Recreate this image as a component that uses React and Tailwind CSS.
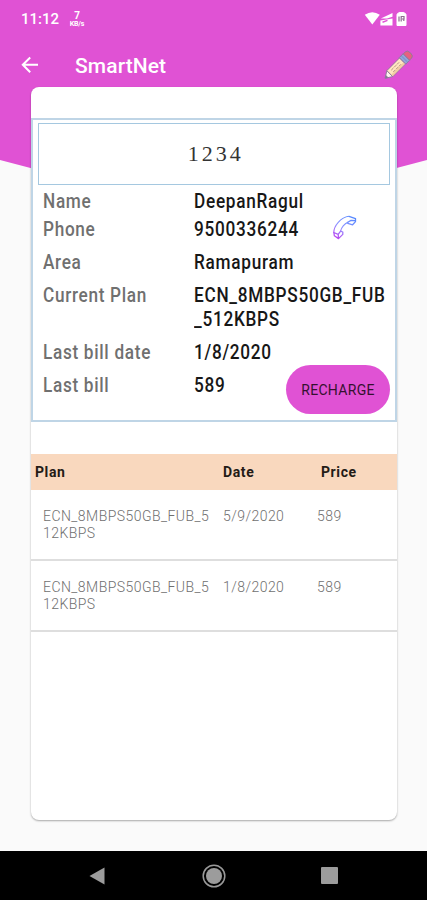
import React from "react";

const details = [
  { label: "Name", value: ["DeepanRagul"], gap: "mb-1" },
  { label: "Phone", value: ["9500336244"], gap: "mb-[9px]", phone: true },
  { label: "Area", value: ["Ramapuram"], gap: "mb-[9px]" },
  { label: "Current Plan", value: ["ECN_8MBPS50GB_FUB", "_512KBPS"], gap: "mb-[9px]" },
  { label: "Last bill date", value: ["1/8/2020"], gap: "mb-[9px]" },
  { label: "Last bill", value: ["589"], gap: "" },
];

const bills = [
  { date: "5/9/2020", price: "589" },
  { date: "1/8/2020", price: "589" },
];

function StatusBar() {
  return (
    <div className="flex h-[37px] items-center pl-[21px] pr-[19px] text-white">
      <span className="w-[38px] whitespace-nowrap pt-px text-[15px] font-medium leading-none">11:12</span>
      <span className="ml-[10px] flex w-4 flex-col items-center pt-px font-bold">
        <span className="text-[10px] leading-[10px]">7</span>
        <span className="text-[7px] leading-[7px] tracking-[-0.2px]">KB/s</span>
      </span>
      <svg className="ml-auto" width="44" height="16" viewBox="0 0 44 16">
        <path d="M.8 3.8Q8.3-1.3 15.8 3.8L8.3 13.4Z" fill="#fff" />
        <path d="M16.4 14.5V9.5L28.5 7.5V14.5Z" fill="#fff" />
        <path d="M16.8 7.6L28.5 2V5.8L23 7.4Z" fill="#fff" />
        <path d="M18.5 11.2L23.5 9.4" stroke="#e052d4" strokeWidth="1.5" />
        <path d="M33 3.2L35.2 1.5H39.8L42 3.2V14.5H33Z" fill="#fff" stroke="#fff" strokeLinejoin="round" />
        <path d="M35 10.5V5.5M37.2 10.5V5.5H40V8H38M39.8 8V10" stroke="#8d6b8e" strokeWidth="1.2" fill="none" />
      </svg>
    </div>
  );
}

function Pencil() {
  return (
    <svg width="30" height="30" viewBox="0 0 30 30">
      <g transform="translate(2.2 28.2) rotate(-45)" stroke="#8f7a9c" strokeWidth=".9" strokeLinejoin="round">
        <path d="M0 0L6.5-4.2V4.2Z" fill="#fff4f0" />
        <path d="M0 0L2.4-1.5V1.5Z" fill="#746984" />
        <path d="M6.5-4.2H24.5V4.2H6.5Z" fill="#ffe6c0" />
        <path d="M7 1.8H24.3V3.8H7Z" fill="#f2cda2" stroke="none" />
        <path d="M10-1.4H22M10 1.3H22" stroke="#a58476" strokeWidth=".8" strokeDasharray="3 1" />
        <path d="M24.5-4.6H30V4.6H24.5Z" fill="#92a4dc" />
        <path d="M27.2-4V4" stroke="#728cc2" />
        <path d="M30-4.4H33Q35.8-4.4 35.8 0T33 4.4H30Z" fill="#e8607f" />
      </g>
    </svg>
  );
}

function PhoneIcon() {
  return (
    <svg className="ml-auto mr-[38px]" width="25" height="25" viewBox="0 0 25 25" fill="none">
      <defs>
        <linearGradient id="call" x1="20" y1="0" x2="5" y2="25" gradientUnits="userSpaceOnUse">
          <stop stopColor="#5087ff" />
          <stop offset=".55" stopColor="#9093ff" />
          <stop offset="1" stopColor="#c03df0" />
        </linearGradient>
      </defs>
      <path d="M1.8 17.5C1.8 11 8.6 2.2 17 1.3M15.8 7.2C12.6 8.6 9.2 12.6 8.6 16.2" stroke="url(#call)" strokeWidth="1.1" strokeLinecap="round" />
      <path d="M17 1.3L23.5 3.6V6.6L20.6 9.8L15.8 8.4V7.2L19 5.4L23.5 5.6M8.6 16.2L10.8 17V19.4L6.5 23.6L2.4 20.8L1.8 17.5L6.2 19.4L8.6 16.2ZM6.2 19.4L6.5 23.6" stroke="url(#call)" strokeWidth="1.3" strokeLinejoin="round" />
    </svg>
  );
}

function AccountDetails() {
  return (
    <section className="h-[304px] border-2 border-[#bfd5e6] px-[5px] pt-[3px]">
      <div className="flex h-[62px] items-center justify-center border-[1.5px] border-[#a5c8e0] pl-[3px] pt-[2px] font-['Liberation_Serif',serif] text-[#333]">
        <span className="scale-x-[1.05] text-[21px] tracking-[2.9px]">1234</span>
      </div>
      <dl className="mt-1 pl-[5px] text-[20px] font-medium leading-6">
        {details.map((row) => (
          <div key={row.label} className={"flex " + row.gap}>
            <dt className="w-[151px] shrink-0 whitespace-nowrap text-[#707070]">
              <span className="inline-block origin-left scale-x-[0.86] tracking-[0.8px]">{row.label}</span>
            </dt>
            <dd className="w-[160px] shrink-0 whitespace-nowrap text-[#171717]">
              {row.value.map((line) => (
                <span key={line} className="block origin-left scale-x-[0.86] tracking-[0.84px]">{line}</span>
              ))}
            </dd>
            {row.phone && <div className="-ml-[22px] -mt-[2px] h-[24px]"><PhoneIcon /></div>}
          </div>
        ))}
      </dl>
      <div className="-mt-[32px] flex justify-end">
        <button className="h-[49px] w-[104px] rounded-full bg-[#e052d4] pt-[2px] text-[14px] tracking-[0.3px] text-[#35112f]">RECHARGE</button>
      </div>
    </section>
  );
}

function BillHistory() {
  return (
    <section className="mt-[32px]">
      <div className="grid h-9 grid-cols-[188px_98px_1fr] items-center bg-[#f9d8be] pl-1 pt-px text-[14px] font-bold tracking-[0.6px] text-[#241b16]">
        <span>Plan</span><span>Date</span><span>Price</span>
      </div>
      {bills.map((bill) => (
        <div key={bill.date} className="grid h-[71px] grid-cols-[180px_94px_1fr] border-b-2 border-[#dedede] pl-3 pt-[18px] text-[14px] font-light leading-[17px] tracking-[0.45px] text-[#6f6f6f]">
          <span>ECN_8MBPS50GB_FUB_5<br />12KBPS</span>
          <span>{bill.date}</span><span>{bill.price}</span>
        </div>
      ))}
    </section>
  );
}

export default function App() {
  return (
    <div className="relative flex h-[900px] w-[427px] flex-col overflow-hidden bg-[#fafafa] font-[Roboto,sans-serif]">
      <div className="absolute inset-x-0 top-0 h-[216px] bg-[#e052d4] [clip-path:polygon(0_0,100%_0,100%_160px,50%_216px,0_160px)]" />
      <div className="relative flex flex-1 flex-col">
        <StatusBar />
        <header className="flex h-[50px] items-center pl-[21px] pr-[14px] pt-[6px] text-white">
          <svg width="18" height="18" viewBox="0 0 18 18" fill="none" stroke="white" strokeWidth="2"><path d="M9.2 1.5L1.8 8.8L9.2 16.2M2 8.8H17" /></svg>
          <h1 className="ml-[36px] pt-[3px] text-[21px] font-medium leading-none tracking-[0.1px]">SmartNet</h1>
          <div className="ml-auto h-[30px]"><Pencil /></div>
        </header>
        <main className="ml-[31px] h-[733px] w-[366px] rounded-[8px] bg-white pt-[31px] shadow-[0_1px_2px_#0005]">
          <AccountDetails />
          <BillHistory />
        </main>
      </div>
      <nav className="relative flex h-[49px] items-center bg-black">
        <svg className="ml-[89px]" width="16" height="18" viewBox="0 0 16 18"><path d="M.5 9L15.5.5V17.5Z" fill="#9c9c9c" /></svg>
        <svg className="ml-[97px]" width="24" height="24" viewBox="0 0 24 24"><circle cx="12" cy="12" r="10.8" fill="none" stroke="#999" strokeWidth="1.5" /><circle cx="12" cy="12" r="8" fill="#9c9c9c" /></svg>
        <div className="ml-[95px] h-[17px] w-[17px] rounded-[1px] bg-[#9c9c9c]" />
      </nav>
    </div>
  );
}
